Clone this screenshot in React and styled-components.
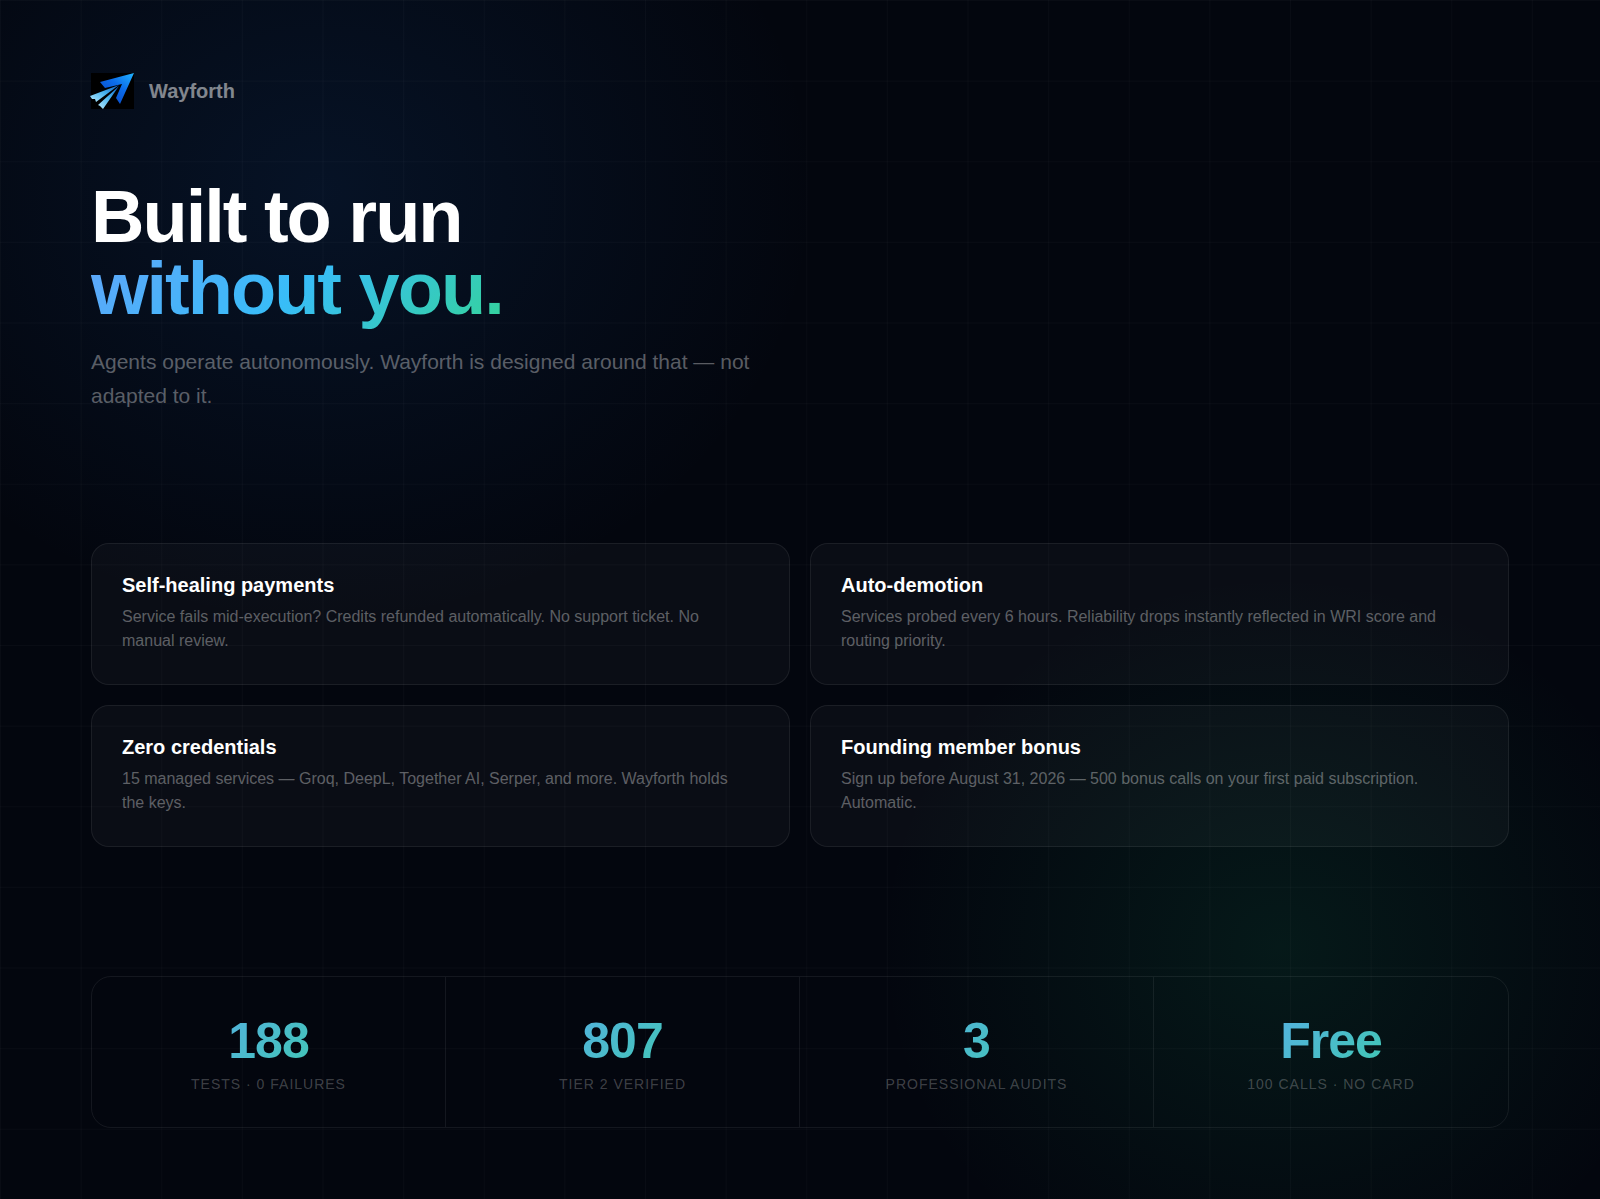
import React from "react"
import styled, { createGlobalStyle } from "styled-components"

const GlobalStyle = createGlobalStyle`
    * {
        box-sizing: border-box;
    }

    body {
        margin: 0;
        background: #03060e;
        color: #fff;
        font-family: "Liberation Sans", Arial, sans-serif;
    }
`

// glows on top of a thin square grid
const Page = styled.div`
    display: flex;
    flex-direction: column;
    justify-content: space-between;
    min-height: 100vh;
    padding: 71px 91px;
    background-image:
        linear-gradient(rgba(255, 255, 255, 0.025) 1px, transparent 1px),
        linear-gradient(90deg, rgba(255, 255, 255, 0.025) 1px, transparent 1px),
        radial-gradient(ellipse 31% 36% at 20% 16%, rgba(28, 104, 200, 0.13), transparent),
        radial-gradient(ellipse 25% 31% at 80% 79%, rgba(24, 180, 115, 0.11), transparent);
    background-size: 5.04vw 5.04vw, 5.04vw 5.04vw, 100% 100%, 100% 100%;
`

const Brand = styled.div`
    display: flex;
    align-items: center;
    gap: 15px;
    color: rgba(255, 255, 255, 0.5);
    font-size: 20px;
    font-weight: bold;
    line-height: 40px;
`

const Logo = styled.svg`
    display: block;
    width: 43px;
    height: 36px;
    overflow: visible;
`

const Title = styled.h1`
    margin: 70px 0 0;
    font-size: 74px;
    font-weight: bold;
    line-height: 72px;
    letter-spacing: -2px;
`

const Accent = styled.span`
    background: linear-gradient(135deg, #60a5fa 0%, #38bdf8 50%, #34d399 100%);
    background-clip: text;
    color: transparent;
`

const Lead = styled.p`
    max-width: 706px;
    margin: 20px 0 0;
    color: rgba(255, 255, 255, 0.35);
    font-size: 21px;
    line-height: 34px;
`

const Cards = styled.section`
    display: grid;
    grid-template-columns: 1fr 1fr;
    gap: 20px;
`

const Card = styled.article`
    padding: 29px 30px 31px;
    border: 1px solid rgba(255, 255, 255, 0.07);
    border-radius: 18px;
    background: rgba(255, 255, 255, 0.03);
`

const CardTitle = styled.h2`
    margin: 0 0 8px;
    font-size: 20px;
    font-weight: bold;
    line-height: 24px;
`

const CardText = styled.p`
    max-width: 620px;
    margin: 0;
    color: rgba(255, 255, 255, 0.35);
    font-size: 16px;
    line-height: 24px;
`

const Stats = styled.section`
    display: grid;
    grid-template-columns: repeat(4, 1fr);
    border: 1px solid rgba(255, 255, 255, 0.07);
    border-radius: 20px;
`

const Stat = styled.div`
    padding: 39px 25px 35px;
    border-right: 1px solid rgba(255, 255, 255, 0.07);
    text-align: center;

    &:last-child {
        border-right: 0;
    }
`

const StatValue = styled.div`
    background: linear-gradient(135deg, #60a5fa, #34d399);
    background-clip: text;
    color: transparent;
    font-size: 50px;
    font-weight: bold;
    line-height: 50px;
    letter-spacing: -1px;
`

const StatLabel = styled.div`
    margin-top: 10px;
    color: rgba(255, 255, 255, 0.24);
    font-size: 14px;
    line-height: 16px;
    letter-spacing: 1px;
    text-transform: uppercase;
`

const cards = [
    {
        title: "Self-healing payments",
        text: "Service fails mid-execution? Credits refunded automatically. No support ticket. No manual review.",
    },
    {
        title: "Auto-demotion",
        text: "Services probed every 6 hours. Reliability drops instantly reflected in WRI score and routing priority.",
    },
    {
        title: "Zero credentials",
        text: "15 managed services — Groq, DeepL, Together AI, Serper, and more. Wayforth holds the keys.",
    },
    {
        title: "Founding member bonus",
        text: "Sign up before August 31, 2026 — 500 bonus calls on your first paid subscription. Automatic.",
    },
]

const stats = [
    { value: "188", label: "Tests · 0 failures" },
    { value: "807", label: "Tier 2 verified" },
    { value: "3", label: "Professional audits" },
    { value: "Free", label: "100 calls · No card" },
]

const LogoMark = () => (
    <Logo viewBox="0 0 43 36" aria-hidden="true">
        <defs>
            <linearGradient id="wing" x1="1" y1="0" x2="0.2" y2="0.9">
                <stop offset="0" stopColor="#22b4ff" />
                <stop offset="0.5" stopColor="#0b6cea" />
                <stop offset="1" stopColor="#0a49c4" />
            </linearGradient>
            <linearGradient id="trail" x1="1" y1="0" x2="0" y2="1">
                <stop offset="0" stopColor="#0a5cc4" />
                <stop offset="0.5" stopColor="#4ab4ee" />
                <stop offset="1" stopColor="#b4e8fc" />
            </linearGradient>
        </defs>
        <rect width="43" height="36" fill="#000" />
        <path d="M43 0 L9 9 L14 15 L31 11 L25 25 L29 31 Z" fill="url(#wing)" />
        <path d="M28 12 L-1 23 L1 26 L4 26 L5 29 Z" fill="url(#trail)" />
        <path d="M28 13 L7 32 L9 33 L12 36 Z" fill="url(#trail)" />
    </Logo>
)

const App = () => (
    <>
        <GlobalStyle />
        <Page>
            <header>
                <Brand>
                    <LogoMark />
                    Wayforth
                </Brand>
                <Title>
                    Built to run
                    <br />
                    <Accent>without you.</Accent>
                </Title>
                <Lead>Agents operate autonomously. Wayforth is designed around that — not adapted to it.</Lead>
            </header>
            <Cards>
                {cards.map(({ title, text }) => (
                    <Card key={title}>
                        <CardTitle>{title}</CardTitle>
                        <CardText>{text}</CardText>
                    </Card>
                ))}
            </Cards>
            <Stats>
                {stats.map(({ value, label }) => (
                    <Stat key={label}>
                        <StatValue>{value}</StatValue>
                        <StatLabel>{label}</StatLabel>
                    </Stat>
                ))}
            </Stats>
        </Page>
    </>
)

export default App
